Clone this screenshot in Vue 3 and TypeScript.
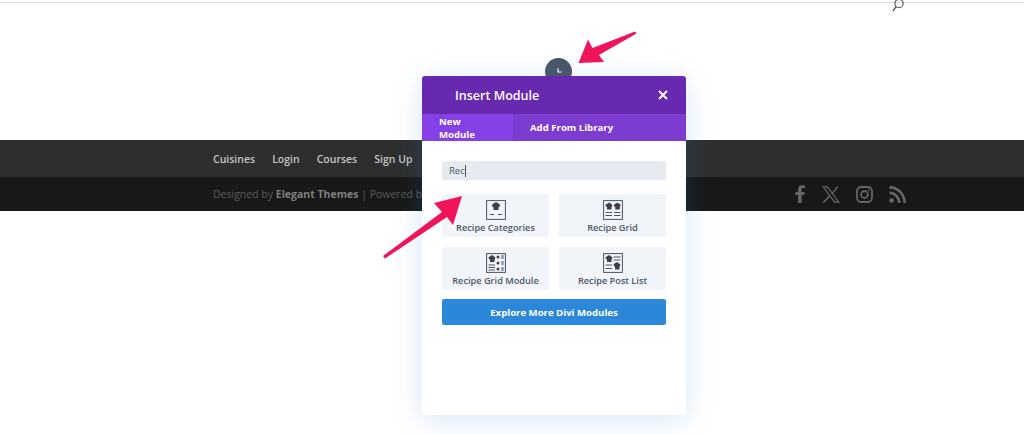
<script setup lang="ts">
const navItems = ["Cuisines", "Login", "Courses", "Sign Up", "Contact"];

interface ModuleItem {
  label: string;
  kind: "categories" | "grid" | "gridModule" | "postList";
}

const modules: ModuleItem[] = [
  { label: "Recipe Categories", kind: "categories" },
  { label: "Recipe Grid", kind: "grid" },
  { label: "Recipe Grid Module", kind: "gridModule" },
  { label: "Recipe Post List", kind: "postList" },
];
</script>

<template>
  <div class="page">
    <header class="site-header">
      <svg class="search" width="14" height="12" viewBox="0 0 14 12" fill="none">
        <circle cx="8" cy="3.5" r="4.2" stroke="#4b4b4b" stroke-width="1.1" />
        <path d="M5 6.8 L2.2 10.6" stroke="#4b4b4b" stroke-width="1.3" stroke-linecap="round" />
      </svg>
    </header>

    <nav class="main-nav">
      <div class="nav-links">
        <span v-for="item in navItems" :key="item">{{ item }}</span>
      </div>
    </nav>

    <footer class="site-footer">
      <div class="credits">
        Designed by <b>Elegant Themes</b> | Powered by <b>WordPress</b>
      </div>
      <div class="socials">
        <svg width="11" height="18" viewBox="0 0 11 18">
          <path fill="#666" d="M3 18 V10 H0.4 V6.9 H3 V4.6 C3 1.7 4.7 0.2 7.2 0.2 C8.4 0.2 9.5 0.3 10 0.4 V3.1 H8.3 C6.9 3.1 6.6 3.8 6.6 4.8 V6.9 H9.8 L9.4 10 H6.6 V18 Z" />
        </svg>
        <svg width="18" height="17" viewBox="0 0 18 17" fill="none">
          <path stroke="#666" stroke-width="1.3" d="M1.2 0.8 H5.4 L16.8 16.2 H12.6 Z" />
          <path stroke="#666" stroke-width="1.5" d="M16 0.6 L10 7.4 M7.8 9.8 L1.4 16.6" />
        </svg>
        <svg width="17" height="17" viewBox="0 0 17 17" fill="none">
          <rect x="1" y="1" width="15" height="15" rx="4.2" stroke="#666" stroke-width="1.8" />
          <circle cx="8.5" cy="8.5" r="3.4" stroke="#666" stroke-width="1.7" />
          <circle cx="12.8" cy="4.2" r="1" fill="#666" />
        </svg>
        <svg width="17" height="17" viewBox="0 0 17 17" fill="none">
          <circle cx="2.6" cy="14.4" r="2.4" fill="#666" />
          <path stroke="#666" stroke-width="2.6" d="M0.4 6.8 C5.6 6.8 10.2 11.2 10.2 17" />
          <path stroke="#666" stroke-width="2.6" d="M0.4 1.4 C8.8 1.4 15.6 8.2 15.6 17" />
        </svg>
      </div>
    </footer>

    <!-- dark round button sits behind the modal -->
    <div class="add-btn">
      <svg width="8" height="8" viewBox="0 0 8 8" fill="none">
        <path d="M3 1.5 V5 H6.5" stroke="#fff" stroke-width="1.2" />
      </svg>
    </div>

    <div class="modal">
      <div class="modal-head">
        <span class="modal-title">Insert Module</span>
        <svg class="close" width="10" height="10" viewBox="0 0 10 10" fill="none">
          <path d="M1 1 L9 9 M9 1 L1 9" stroke="#fff" stroke-width="1.9" />
        </svg>
      </div>
      <div class="tabs">
        <div class="tab active">New Module</div>
        <div class="tab">Add From Library</div>
      </div>
      <div class="modal-body">
        <div class="search-input">Rec<span class="caret"></span></div>
        <div class="module-grid">
          <div v-for="m in modules" :key="m.label" class="module">
            <svg class="module-icon" width="20" height="20" viewBox="0 0 20 20" fill="none">
              <rect x="0.6" y="0.6" width="18.8" height="18.8" stroke="#4b5563" stroke-width="1" />
              <template v-if="m.kind === 'categories'">
                <path fill="#3f3f46" d="M6 5.5 a2 2 0 0 1 2-2 a2.2 2.2 0 0 1 4 0 a2 2 0 0 1 2 2 a2 2 0 0 1-1.5 1.8 V10 H7.5 V7.3 A2 2 0 0 1 6 5.5 Z" />
                <path stroke="#4b5563" stroke-width="1" d="M4 14.5 H8 M12 14.5 H16" />
              </template>
              <template v-else-if="m.kind === 'grid'">
                <path fill="#3f3f46" d="M2.5 5.5 a1.8 1.8 0 0 1 1.8-1.8 a1.9 1.9 0 0 1 3.4 0 a1.8 1.8 0 0 1 .8 3.3 V9.5 H4 V7 A1.8 1.8 0 0 1 2.5 5.5 Z" />
                <path fill="#3f3f46" d="M10.8 5.5 a1.8 1.8 0 0 1 1.8-1.8 a1.9 1.9 0 0 1 3.4 0 a1.8 1.8 0 0 1 .8 3.3 V9.5 H12.3 V7 A1.8 1.8 0 0 1 10.8 5.5 Z" />
                <path stroke="#4b5563" stroke-width="1" d="M2.5 12.5 H9 M2.5 15.5 H9 M11 12.5 H17.5 M11 15.5 H17.5" />
              </template>
              <template v-else-if="m.kind === 'gridModule'">
                <path fill="#3f3f46" d="M2.5 5 a1.8 1.8 0 0 1 1.8-1.8 a1.9 1.9 0 0 1 3.4 0 a1.8 1.8 0 0 1 .8 3.3 V9 H4 V6.5 A1.8 1.8 0 0 1 2.5 5 Z" />
                <circle cx="12" cy="4" r="1.5" fill="#3f3f46" />
                <circle cx="12" cy="10" r="1.5" fill="#3f3f46" />
                <circle cx="12" cy="16" r="1.5" fill="#3f3f46" />
                <path stroke="#4b5563" stroke-width="1" d="M15 3 H18 M15 5 H18 M15 9 H18 M15 11 H18 M15 15 H18 M15 17 H18 M2.5 12 H9 M2.5 14.5 H9 M2.5 17 H9" />
              </template>
              <template v-else>
                <path fill="#3f3f46" d="M2.5 5 a1.8 1.8 0 0 1 1.8-1.8 a1.9 1.9 0 0 1 3.4 0 a1.8 1.8 0 0 1 .8 3.3 V9 H4 V6.5 A1.8 1.8 0 0 1 2.5 5 Z" />
                <path fill="#3f3f46" d="M10.5 12 a1.8 1.8 0 0 1 1.8-1.8 a1.9 1.9 0 0 1 3.4 0 a1.8 1.8 0 0 1 .8 3.3 V16.5 H12 V13.5 A1.8 1.8 0 0 1 10.5 12 Z" />
                <path stroke="#4b5563" stroke-width="1" d="M10.5 4 H17.5 M10.5 7 H17.5 M2.5 12 H9 M2.5 15.5 H9" />
              </template>
            </svg>
            <span class="module-label">{{ m.label }}</span>
          </div>
        </div>
        <div class="explore">Explore More Divi Modules</div>
      </div>
    </div>

    <!-- annotation arrows -->
    <svg class="arrow arrow-top" width="60" height="34" viewBox="0 0 60 34">
      <path fill="#f0145a" d="M57 0.5 L58.5 2.5 L21 24 L26 31 L0.5 32 L10 8.5 L14.5 17 Z" />
    </svg>
    <svg class="arrow arrow-left" width="84" height="64" viewBox="0 0 84 64">
      <path fill="#f0145a" d="M1 61 L60 17 L52 8 L80 1 L71 30 L65 22 L3 63.5 Z" />
    </svg>
  </div>
</template>

<style>
html,
body {
  margin: 0;
  background: #fff;
}
</style>

<style scoped>
.page {
  position: relative;
  width: 1024px;
  height: 434px;
  overflow: hidden;
  background: #fff;
  font-family: "Open Sans", "Noto Sans", sans-serif;
}

.site-header {
  height: 138px;
  border-top: 0;
  box-shadow: inset 0 3px 0 -2px #fff;
  position: relative;
  border-bottom: 0;
  margin-top: 0;
  padding-top: 2px;
  background: linear-gradient(#fff 2px, #dcdcdc 2px, #dcdcdc 3px, #fff 3px);
}

.search {
  position: absolute;
  left: 891px;
  top: 0;
}

.main-nav {
  height: 37px;
  background: #2e2e2e;
  display: flex;
  align-items: center;
  padding-left: 213px;
}

.nav-links {
  display: flex;
  gap: 17px;
  font-size: 10.5px;
  font-weight: 600;
  color: #c4c4c4;
}

.site-footer {
  height: 34px;
  background: #181818;
  display: flex;
  align-items: center;
  justify-content: space-between;
  padding: 0 118px 0 213px;
}

.credits {
  font-size: 10.5px;
  color: #5b5b5b;
}

.credits b {
  font-weight: 700;
  color: #7e7e7e;
}

.socials {
  display: flex;
  align-items: center;
  gap: 16px;
}

.add-btn {
  position: absolute;
  left: 545px;
  top: 58px;
  width: 27px;
  height: 27px;
  border-radius: 50%;
  background: #4a5568;
  display: flex;
  justify-content: center;
  padding-top: 9px;
  box-sizing: border-box;
}

.modal {
  position: absolute;
  left: 422px;
  top: 76px;
  width: 264px;
  height: 339px;
  background: #fff;
  border-radius: 3px;
  box-shadow: 0 5px 30px rgba(43, 135, 218, 0.2);
}

.modal-head {
  height: 38px;
  background: #6629b0;
  border-radius: 3px 3px 0 0;
  display: flex;
  align-items: center;
  justify-content: space-between;
  padding: 0 18px 0 33px;
  color: #fff;
}

.modal-title {
  font-size: 12.5px;
  font-weight: 600;
}

.tabs {
  display: flex;
  height: 27px;
  background: #7b3ccf;
}

.tab {
  display: flex;
  align-items: center;
  padding: 0 17px;
  font-size: 9.6px;
  font-weight: 700;
  color: #fff;
}

.tab.active {
  width: 91px;
  box-sizing: border-box;
  background: #8541e6;
}

.modal-body {
  padding: 20px 20px 0;
}

.search-input {
  height: 19px;
  background: #e6ebf2;
  border-radius: 2px;
  padding-left: 7px;
  font-size: 9.5px;
  line-height: 19px;
  color: #4c5866;
  display: flex;
  align-items: center;
}

.caret {
  width: 1px;
  height: 12px;
  background: #4c5866;
}

.module-grid {
  display: grid;
  grid-template-columns: 107px 107px;
  justify-content: space-between;
  gap: 10px;
  margin-top: 14px;
}

.module {
  height: 43px;
  background: #f1f5f9;
  border-radius: 2px;
  display: flex;
  flex-direction: column;
  align-items: center;
  padding-top: 6px;
  box-sizing: border-box;
}

.module-icon {
  flex: none;
}

.module-label {
  margin-top: 1px;
  font-size: 9.2px;
  font-weight: 600;
  color: #4c5866;
  white-space: nowrap;
}

.explore {
  margin-top: 9px;
  height: 26px;
  background: #2b87da;
  border-radius: 2px;
  display: flex;
  align-items: center;
  justify-content: center;
  color: #fff;
  font-size: 9.6px;
  font-weight: 700;
}

.arrow {
  position: absolute;
}

.arrow-top {
  left: 578px;
  top: 31px;
}

.arrow-left {
  left: 382px;
  top: 195px;
}
</style>
